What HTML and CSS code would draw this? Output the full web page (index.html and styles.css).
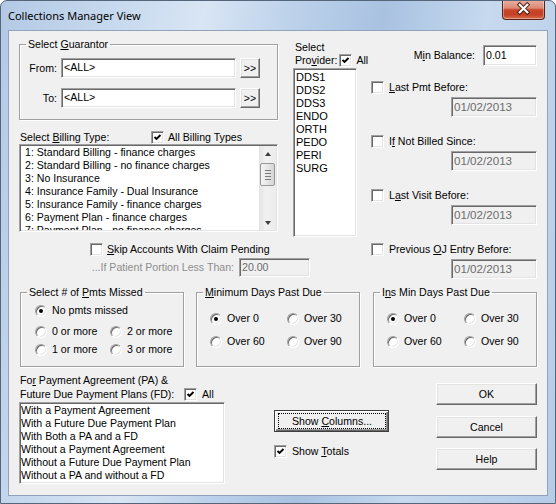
FILE: index.html
```html
<!DOCTYPE html>
<html lang="en">
<head>
    <meta charset="UTF-8">
    <title>Collections Manager View</title>
    <link rel="stylesheet" href="styles.css">
</head>
<body>
<div class="window">
    <div class="titlebar">
        <span class="title">Collections Manager View</span>
        <span class="close">
            <svg width="43" height="19" viewBox="0 0 43 19">
                <path d="M17.5 5.5 L25.5 13.5 M25.5 5.5 L17.5 13.5" stroke="#4a2219" stroke-width="4.2" stroke-linecap="square"/>
                <path d="M17.5 5.5 L25.5 13.5 M25.5 5.5 L17.5 13.5" stroke="#fff" stroke-width="2.2" stroke-linecap="square"/>
            </svg>
        </span>
    </div>

    <div class="client">
        <div class="top">
            <div class="left-block">
                <div class="upper">
                    <div class="col-left">
                        <fieldset class="group guarantor">
                            <legend>Select <u>G</u>uarantor</legend>
                            <div class="guar-body">
                                <div class="guar-row">
                                    <span class="guar-label">From:</span>
                                    <span class="field guar-field">&lt;ALL&gt;</span>
                                    <span class="btn more">&gt;&gt;</span>
                                </div>
                                <div class="guar-row">
                                    <span class="guar-label">To:</span>
                                    <span class="field guar-field">&lt;ALL&gt;</span>
                                    <span class="btn more">&gt;&gt;</span>
                                </div>
                            </div>
                        </fieldset>

                        <div class="billing-head">
                            <span class="billing-label">Select <u>B</u>illing Type:</span>
                            <span class="check"><svg viewBox="0 0 9 9"><path d="M1.5 4 L3.5 6 L7.5 2"/></svg></span>
                            <span>All Billing Types</span>
                        </div>
                        <div class="listbox billing">
                            <div class="items">
                                <div>1: Standard Billing - finance charges</div>
                                <div>2: Standard Billing - no finance charges</div>
                                <div>3: No Insurance</div>
                                <div>4: Insurance Family - Dual Insurance</div>
                                <div>5: Insurance Family - finance charges</div>
                                <div>6: Payment Plan - finance charges</div>
                                <div>7: Payment Plan - no finance charges</div>
                            </div>
                            <div class="scrollbar">
                                <div class="arrow up"></div>
                                <div class="thumb"><i></i><i></i><i></i><i></i></div>
                                <div class="track"></div>
                                <div class="arrow down"></div>
                            </div>
                        </div>
                    </div>

                    <div class="col-provider">
                        <div class="prov-head">Select</div>
                        <div class="prov-head prov-row">
                            <span>Pro<u>v</u>ider:</span>
                            <span class="check"><svg viewBox="0 0 9 9"><path d="M1.5 4 L3.5 6 L7.5 2"/></svg></span>
                            <span>All</span>
                        </div>
                        <div class="listbox provider">
                            <div>DDS1</div>
                            <div>DDS2</div>
                            <div>DDS3</div>
                            <div>ENDO</div>
                            <div>ORTH</div>
                            <div>PEDO</div>
                            <div>PERI</div>
                            <div>SURG</div>
                        </div>
                    </div>
                </div>

                <div class="skip-row">
                    <span class="check off"></span>
                    <span><u>S</u>kip Accounts With Claim Pending</span>
                </div>
                <div class="portion-row">
                    <span class="portion-label">...If Patient Portion Less Than:</span>
                    <span class="field disabled portion-field">20.00</span>
                </div>
            </div>

            <div class="col-right">
                <div class="minbal">
                    <span class="minbal-label">M<u>i</u>n Balance:</span>
                    <span class="field minbal-field">0.01</span>
                </div>
                <div class="date-group">
                    <div class="check-row"><span class="check off"></span><span><u>L</u>ast Pmt Before:</span></div>
                    <span class="field disabled date">01/02/2013</span>
                </div>
                <div class="date-group">
                    <div class="check-row"><span class="check off"></span><span>I<u>f</u> Not Billed Since:</span></div>
                    <span class="field disabled date">01/02/2013</span>
                </div>
                <div class="date-group">
                    <div class="check-row"><span class="check off"></span><span>L<u>a</u>st Visit Before:</span></div>
                    <span class="field disabled date">01/02/2013</span>
                </div>
                <div class="date-group">
                    <div class="check-row"><span class="check off"></span><span>Previous <u>O</u>J Entry Before:</span></div>
                    <span class="field disabled date">01/02/2013</span>
                </div>
            </div>
        </div>

        <div class="groups">
            <fieldset class="group radios pmts">
                <legend>Select # of <u>P</u>mts Missed</legend>
                <div class="pmts-body">
                    <div class="radio-item first"><span class="radio on"></span>No pmts missed</div>
                    <div class="radio-grid pmts-grid">
                        <div class="radio-item"><span class="radio"></span>0 or more</div>
                        <div class="radio-item"><span class="radio"></span>2 or more</div>
                        <div class="radio-item"><span class="radio"></span>1 or more</div>
                        <div class="radio-item"><span class="radio"></span>3 or more</div>
                    </div>
                </div>
            </fieldset>
            <fieldset class="group radios days">
                <legend><u>M</u>inimum Days Past Due</legend>
                <div class="radio-grid days-grid">
                    <div class="radio-item"><span class="radio on"></span>Over 0</div>
                    <div class="radio-item"><span class="radio"></span>Over 30</div>
                    <div class="radio-item"><span class="radio"></span>Over 60</div>
                    <div class="radio-item"><span class="radio"></span>Over 90</div>
                </div>
            </fieldset>
            <fieldset class="group radios ins">
                <legend>I<u>n</u>s Min Days Past Due</legend>
                <div class="radio-grid days-grid">
                    <div class="radio-item"><span class="radio on"></span>Over 0</div>
                    <div class="radio-item"><span class="radio"></span>Over 30</div>
                    <div class="radio-item"><span class="radio"></span>Over 60</div>
                    <div class="radio-item"><span class="radio"></span>Over 90</div>
                </div>
            </fieldset>
        </div>

        <div class="bottom">
            <div class="pa">
                <div class="pa-line">Fo<u>r</u> Payment Agreement (PA) &amp;</div>
                <div class="pa-row">
                    <span class="pa-label">Future Due Payment Plans (FD):</span>
                    <span class="check"><svg viewBox="0 0 9 9"><path d="M1.5 4 L3.5 6 L7.5 2"/></svg></span>
                    <span>All</span>
                </div>
                <div class="listbox pa-list">
                    <div>With a Payment Agreement</div>
                    <div>With a Future Due Payment Plan</div>
                    <div>With Both a PA and a FD</div>
                    <div>Without a Payment Agreement</div>
                    <div>Without a Future Due Payment Plan</div>
                    <div>Without a PA and without a FD</div>
                </div>
            </div>
            <div class="mid">
                <span class="btn default"><span class="focus"><span>Show <u>C</u>olumns...</span></span></span>
                <div class="totals-row">
                    <span class="check"><svg viewBox="0 0 9 9"><path d="M1.5 4 L3.5 6 L7.5 2"/></svg></span>
                    <span>Show <u>T</u>otals</span>
                </div>
            </div>
            <div class="actions">
                <span class="btn action">OK</span>
                <span class="btn action">Cancel</span>
                <span class="btn action">Help</span>
            </div>
        </div>
    </div>
</div>
</body>
</html>
```

FILE: styles.css
```css
body {
    margin: 0;
    font-family: "Liberation Sans", Arial, sans-serif;
    font-size: 10.6px;
    line-height: 13px;
    color: #000;
    background: #fff;
}
u {
    text-decoration-thickness: 1px;
    text-underline-offset: 1px;
}
.window {
    width: 556px;
    height: 504px;
    box-sizing: border-box;
    border: 1px solid #55667a;
    border-radius: 7px 7px 0 0;
    overflow: hidden;
    background: linear-gradient(100deg, #b3c9e4 0%, #c7d9ee 18%, #d8e5f4 32%, #bcd1ea 46%, #a9c2e1 60%, #c6d9ee 76%, #b6cce7 100%);
}
.titlebar {
    height: 29px;
    display: flex;
    align-items: center;
    padding-left: 7px;
}
.title {
    font-family: "Noto Sans", "Liberation Sans", sans-serif;
    font-size: 11px;
    color: #000;
}
.close {
    margin-left: auto;
    margin-right: 10px;
    align-self: flex-start;
    margin-top: -1px;
    width: 43px;
    height: 20px;
    box-sizing: border-box;
    border: 1px solid #5a2217;
    border-top: none;
    border-radius: 0 0 4px 4px;
    background: linear-gradient(#e9b0a2 0%, #dc8a73 42%, #c8452a 52%, #c44126 78%, #d9714f 100%);
    box-shadow: inset 0 0 0 1px rgba(255, 255, 255, 0.35);
    display: flex;
}
.close svg {
    margin-top: -1px;
}

/* client area */
.client {
    margin: 0 7px;
    height: 466px;
    box-sizing: border-box;
    border: 1px solid #8fa3bb;
    background: #f0f0f0;
    padding: 7px 0 0 10px;
}
.top {
    display: flex;
    align-items: flex-start;
}
.left-block {
    width: 338px;
}
.upper {
    display: flex;
    align-items: flex-start;
}
.col-left {
    width: 259px;
}

/* controls */
.group {
    margin: 0;
    padding: 0;
    min-width: 0;
    box-sizing: border-box;
    border: 1px solid #a0a0a0;
    box-shadow: inset 1px 1px 0 #fff, 1px 1px 0 #fff;
}
.group legend {
    margin-left: 6px;
    padding: 0 2px;
    line-height: 13px;
}
.field {
    display: block;
    box-sizing: border-box;
    height: 20px;
    line-height: 17px;
    padding-left: 2px;
    border: 1px solid;
    border-color: #a0a0a0 #fff #fff #a0a0a0;
    box-shadow: inset 1px 1px 0 #696969, inset -1px -1px 0 #e3e3e3;
    background: #fff;
    white-space: nowrap;
    overflow: hidden;
}
.field.disabled {
    background: #f0f0f0;
    color: #6d6d6d;
}
.btn {
    display: flex;
    align-items: center;
    justify-content: center;
    box-sizing: border-box;
    background: #f0f0f0;
    border: 1px solid;
    border-color: #fff #696969 #696969 #fff;
    box-shadow: inset -1px -1px 0 #a0a0a0, inset 1px 1px 0 #e3e3e3;
}
.check {
    display: inline-flex;
    align-items: center;
    justify-content: center;
    flex: none;
    width: 13px;
    height: 13px;
    box-sizing: border-box;
    border: 1px solid;
    border-color: #a0a0a0 #fff #fff #a0a0a0;
    box-shadow: inset 1px 1px 0 #696969, inset -1px -1px 0 #e3e3e3;
    background: #fff;
}
.check svg {
    width: 9px;
    height: 9px;
}
.check path {
    fill: none;
    stroke: #000;
    stroke-width: 1.9;
}
.radio {
    position: relative;
    flex: none;
    width: 12px;
    height: 12px;
    box-sizing: border-box;
    border-radius: 50%;
    border: 1px solid;
    border-color: #a0a0a0 #fff #fff #a0a0a0;
    box-shadow: inset 1px 1px 0 #696969, inset -1px -1px 0 #e3e3e3;
    background: #fff;
}
.radio.on::after {
    content: "";
    position: absolute;
    left: 3px;
    top: 3px;
    width: 4px;
    height: 4px;
    border-radius: 50%;
    background: #000;
}
.listbox {
    box-sizing: border-box;
    border: 1px solid;
    border-color: #a0a0a0 #fff #fff #a0a0a0;
    box-shadow: inset 1px 1px 0 #696969, inset -1px -1px 0 #e3e3e3;
    background: #fff;
    padding: 1px;
    overflow: hidden;
    white-space: nowrap;
}

/* guarantor */
.guar-body {
    padding: 7px 0 11px 6px;
}
.guar-row {
    display: flex;
    align-items: center;
}
.guar-row + .guar-row {
    margin-top: 10px;
}
.guar-label {
    width: 31px;
    text-align: right;
    margin-right: 4px;
}
.guar-field {
    width: 175px;
}
.more {
    width: 20px;
    height: 20px;
    margin-left: 4px;
}

/* billing */
.billing-head {
    display: flex;
    align-items: center;
    height: 14px;
    margin-top: 10px;
}
.billing-label {
    width: 132px;
    padding-left: 1px;
    box-sizing: border-box;
}
.billing-head .check {
    margin-right: 4px;
}
.billing {
    display: flex;
    width: 259px;
    height: 88px;
}
.billing .items {
    flex: 1;
    padding-left: 4px;
    overflow: hidden;
}
.scrollbar {
    width: 17px;
    display: flex;
    flex-direction: column;
    background: linear-gradient(to right, #e3e3e3, #f1f1f1 40%, #ececec);
}
.arrow {
    height: 17px;
    display: flex;
    align-items: center;
    justify-content: center;
}
.arrow::after {
    content: "";
    border-left: 3.5px solid transparent;
    border-right: 3.5px solid transparent;
}
.arrow.up::after {
    border-bottom: 4px solid #3c3c3c;
    margin-top: -2px;
}
.arrow.down::after {
    border-top: 4px solid #3c3c3c;
    margin-top: 2px;
}
.thumb {
    height: 23px;
    margin: 0 1px;
    box-sizing: border-box;
    border: 1px solid #979797;
    border-radius: 2px;
    background: linear-gradient(to right, #f5f5f5, #e6e6e6 50%, #d5d5d5);
    display: flex;
    flex-direction: column;
    align-items: center;
    justify-content: center;
    gap: 2px;
}
.thumb i {
    display: block;
    width: 6px;
    height: 1px;
    background: #7a7a7a;
}
.track {
    flex: 1;
}

/* provider */
.col-provider {
    margin-left: 15px;
    width: 64px;
    padding-top: 3px;
}
.prov-head {
    padding-left: 2px;
}
.prov-row {
    display: flex;
    align-items: center;
    height: 13px;
}
.prov-row .check {
    margin: 0 4px 0 2px;
}
.provider {
    margin-top: 1px;
    width: 64px;
    height: 169px;
    padding: 2px 1px 1px 2px;
    font-size: 11px;
}

/* skip */
.skip-row {
    display: flex;
    align-items: center;
    gap: 4px;
    height: 13px;
    margin-top: 6px;
    padding-left: 71px;
}
.portion-row {
    display: flex;
    align-items: center;
    margin-top: 2px;
}
.portion-label {
    width: 220px;
    padding-right: 5px;
    box-sizing: border-box;
    text-align: right;
    color: #8d8d8d;
}
.portion-field {
    width: 71px;
    height: 19px;
    line-height: 16px;
}

/* right column */
.col-right {
    margin-left: 14px;
    width: 166px;
    display: flex;
    flex-direction: column;
}
.minbal {
    display: flex;
    align-items: center;
    justify-content: flex-end;
    margin-top: 7px;
}
.minbal-label {
    margin-right: 8px;
}
.minbal-field {
    width: 54px;
    height: 21px;
    line-height: 18px;
}
.date-group {
    display: flex;
    flex-direction: column;
    margin-top: 17px;
}
.minbal + .date-group {
    margin-top: 14px;
}
.check-row {
    display: flex;
    align-items: center;
    gap: 5px;
    height: 14px;
}
.date {
    align-self: flex-end;
    width: 86px;
    margin-top: 3px;
    font-size: 11.6px;
}

/* radio groups */
.groups {
    display: flex;
    align-items: flex-start;
    margin-top: 7px;
}
.radios {
    width: 164px;
    height: 81px;
}
.pmts {
    margin-left: 1px;
}
.days {
    margin-left: 12px;
}
.ins {
    margin-left: 13px;
}
.radio-item {
    display: flex;
    align-items: center;
    gap: 5px;
    height: 13px;
}
.pmts-body {
    padding: 5px 0 0 14px;
}
.radio-grid {
    display: grid;
}
.pmts-grid {
    grid-template-columns: 75px auto;
    row-gap: 5px;
    margin-top: 8px;
}
.days-grid {
    grid-template-columns: 77px auto;
    row-gap: 10px;
    padding: 13px 0 0 13px;
}

/* bottom */
.bottom {
    display: flex;
    align-items: flex-start;
    margin-top: 7px;
}
.pa {
    width: 206px;
}
.pa-line {
    padding-left: 1px;
}
.pa-row {
    display: flex;
    align-items: center;
    height: 14px;
}
.pa-label {
    width: 165px;
    padding-left: 1px;
    box-sizing: border-box;
}
.pa-row .check {
    margin-right: 5px;
}
.pa-list {
    margin-top: 1px;
    height: 82px;
    padding-top: 1px;
}
.mid {
    margin-left: 49px;
    width: 115px;
}
.btn.default {
    margin-top: 36px;
    height: 22px;
    padding: 2px 2px 2px 3px;
    border: 1px solid #3d3d3d;
    box-shadow: inset 1px 1px 0 #fff, inset -1px -1px 0 #696969, inset -2px -2px 0 #a0a0a0;
}
.focus {
    flex: 1;
    align-self: stretch;
    display: flex;
    align-items: center;
    justify-content: center;
    border: 1px dotted #000;
}
.totals-row {
    display: flex;
    align-items: center;
    gap: 5px;
    margin-top: 13px;
}
.actions {
    margin-left: 47px;
    width: 101px;
}
.btn.action {
    height: 22px;
    margin-top: 10px;
}
.btn.action:first-child {
    margin-top: 9px;
}
.btn.action:nth-child(2) {
    margin-top: 11px;
}
```
